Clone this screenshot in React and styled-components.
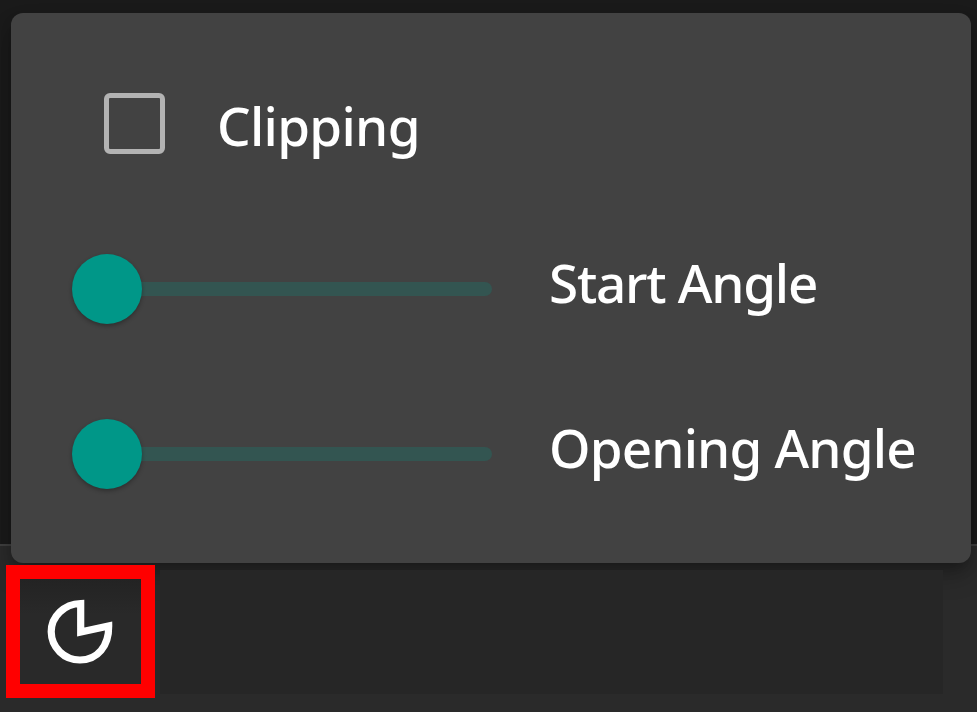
import React from "react";
import styled, { createGlobalStyle } from "styled-components";

const GlobalStyle = createGlobalStyle`
  * { box-sizing: border-box; }
  body { margin: 0; overflow: hidden; background: #1a1a1a; }
`;

const Screen = styled.main`
  position: relative;
  display: flex;
  flex-direction: column;
  width: 977px;
  height: 712px;
  overflow: hidden;
  background: #1a1a1a;
  font-family: "Noto Sans", "Open Sans", sans-serif;
`;

const Viewport = styled.div`
  flex: 1;
`;

const Toolbar = styled.footer`
  display: flex;
  align-items: flex-start;
  height: 168px;
  padding: 19px 34px 0 6px;
  gap: 5px;
  border-top: 2px solid #3e3e3e;
  background: #2a2a2a;
`;

const ToolButton = styled.button`
  position: relative;
  z-index: 2;
  display: flex;
  align-items: flex-start;
  width: 149px;
  height: 133px;
  padding: 19px 0 0 26px;
  border: 14px solid #ff0000;
  background: linear-gradient(#232323, #292929 35px);
  color: #fff;
`;

const ToolArea = styled.div`
  position: relative;
  z-index: 2;
  flex: 1;
  height: 124px;
  margin-top: 5px;
  background: #262626;
`;

const Popup = styled.section`
  position: absolute;
  z-index: 1;
  top: 13px;
  left: 11px;
  width: 960px;
  height: 550px;
  padding: 60px 0 0 61px;
  border-radius: 12px;
  background: #424242;
  box-shadow: 0 7px 14px -4px rgba(0, 0, 0, 0.3), 0 14px 24px rgba(0, 0, 0, 0.2);
`;

const Row = styled.label`
  display: flex;
  align-items: center;
  height: ${(p) => p.$height}px;
`;

const Check = styled.input`
  appearance: none;
  width: 61px;
  height: 61px;
  margin: 0 52px 1px 32px;
  border: 5px solid #b3b3b3;
  border-radius: 6px;
`;

const Slider = styled.input`
  appearance: none;
  width: 420px;
  height: 70px;
  margin: 0 57px 0 0;
  background: transparent;

  &::-webkit-slider-runnable-track {
    height: 14px;
    border-radius: 7px;
    background: #335551;
  }

  &::-webkit-slider-thumb {
    appearance: none;
    width: 70px;
    height: 70px;
    margin-top: -28px;
    border-radius: 50%;
    background: #009788;
    box-shadow: 0 2px 4px rgba(0, 0, 0, 0.3);
  }
`;

const Caption = styled.span`
  margin-top: ${(p) => p.$shift}px;
  color: #fff;
  font-size: 53px;
  font-weight: 500;
  line-height: 70px;
  letter-spacing: ${(p) => p.$tracking}px;
  white-space: nowrap;
`;

function ClippingIcon() {
  return (
    <svg width="70" height="70" viewBox="0 0 70 70" fill="none" stroke="currentColor" strokeWidth="7.2">
      <path d="M34.7 5.5 C18 6 5.2 18.5 5.2 33.8 A28.6 28.6 0 0 0 34 62 C51.5 62 63 48 62.7 28 L34.7 34 Z" />
    </svg>
  );
}

export default function App() {
  return (
    <Screen>
      <GlobalStyle />
      <Viewport />
      <Popup>
        <Row $height={102}>
          <Check type="checkbox" />
          <Caption $shift={4} $tracking={-0.7}>Clipping</Caption>
        </Row>
        <Row $height={228}>
          <Slider type="range" defaultValue="0" />
          <Caption $shift={-12} $tracking={-1.25}>Start Angle</Caption>
        </Row>
        <Row $height={102}>
          <Slider type="range" defaultValue="0" />
          <Caption $shift={-12} $tracking={-0.85}>Opening Angle</Caption>
        </Row>
      </Popup>
      <Toolbar>
        <ToolButton aria-label="Clipping">
          <ClippingIcon />
        </ToolButton>
        <ToolArea />
      </Toolbar>
    </Screen>
  );
}
